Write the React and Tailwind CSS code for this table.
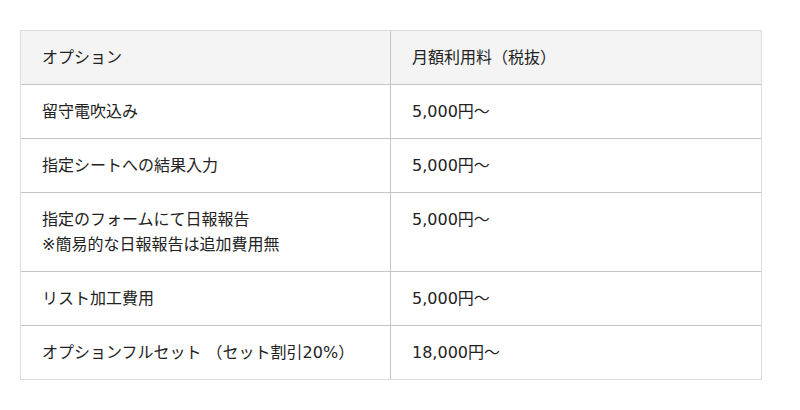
const rows = [
  { option: ["留守電吹込み"], price: "5,000円〜" },
  { option: ["指定シートへの結果入力"], price: "5,000円〜" },
  {
    option: ["指定のフォームにて日報報告", "※簡易的な日報報告は追加費用無"],
    price: "5,000円〜",
  },
  { option: ["リスト加工費用"], price: "5,000円〜" },
  { option: ["オプションフルセット （セット割引20%）"], price: "18,000円〜" },
];

function App() {
  return (
    <div className="bg-white min-h-screen px-5 pt-[30px] font-['DejaVu_Sans','Noto_Sans_CJK_JP',sans-serif] text-[#222] text-base leading-[25px]">
      <table className="w-[742px] table-fixed border-separate border-spacing-0 border border-[#dcdcdc]">
        <thead>
          <tr className="bg-[#f4f4f4]">
            <th className="w-1/2 text-left font-normal align-top px-[21px] py-[14px] border-r border-b border-[#c4c4c4]">
              オプション
            </th>
            <th className="w-1/2 text-left font-normal align-top px-[21px] py-[14px] border-b border-[#c4c4c4]">
              月額利用料（税抜）
            </th>
          </tr>
        </thead>
        <tbody>
          {rows.map((row, i) => {
            const last = i === rows.length - 1;
            return (
              <tr key={i}>
                <td
                  className={`align-top px-[21px] py-[14px] border-r border-[#c4c4c4] ${
                    last ? "" : "border-b"
                  }`}
                >
                  {row.option.map((line, j) => (
                    <div key={j}>{line}</div>
                  ))}
                </td>
                <td
                  className={`align-top px-[21px] py-[14px] border-[#c4c4c4] ${
                    last ? "" : "border-b"
                  }`}
                >
                  {row.price}
                </td>
              </tr>
            );
          })}
        </tbody>
      </table>
    </div>
  );
}

export default App;
